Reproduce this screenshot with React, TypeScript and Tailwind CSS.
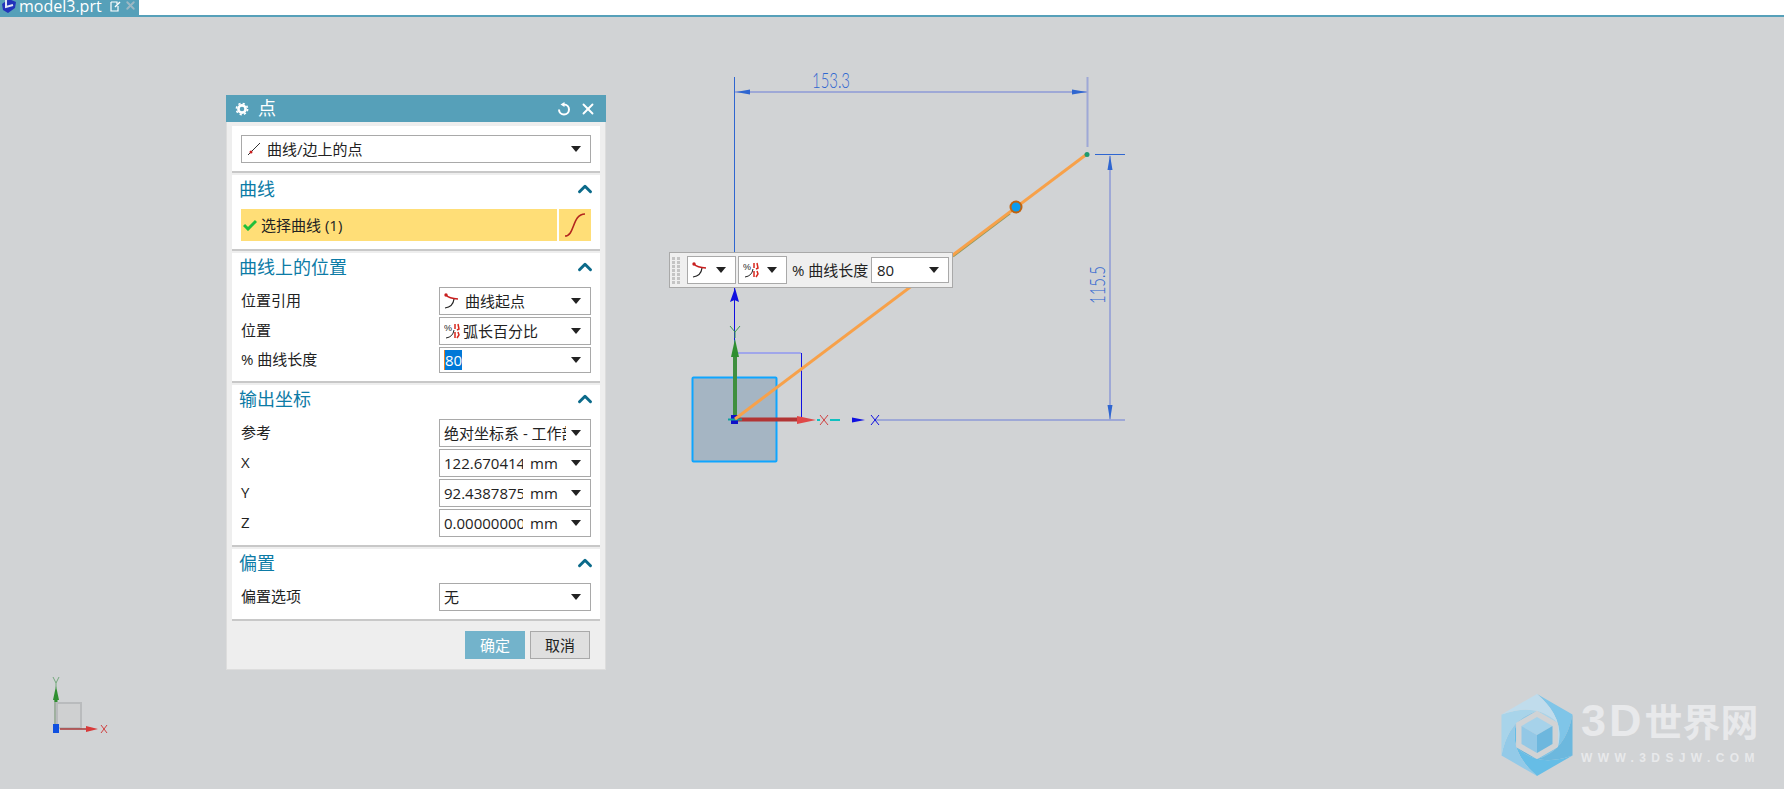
import React from 'react';
import { ChevronUp, X } from 'lucide-react';

const Caret = () => (
  <span className="ml-auto w-0 h-0 border-x-[5px] border-x-transparent border-t-[6px] border-t-[#222] shrink-0" />
);

const LineIcon = () => (
  <svg width="16" height="16" viewBox="0 0 16 16" className="shrink-0">
    <path d="M2 14 L14 2" stroke="#333" strokeWidth="1" />
    <circle cx="5" cy="11" r="1.5" fill="#c81e1e" />
  </svg>
);

const StartIcon = () => (
  <svg width="16" height="16" viewBox="0 0 16 16" className="shrink-0">
    <path d="M1 15 Q9 14 10 6" stroke="#222" strokeWidth="1.2" fill="none" />
    <path d="M2 2 Q5 5.5 14 6" stroke="#c81e1e" strokeWidth="1.3" fill="none" />
    <circle cx="2" cy="2" r="1.7" fill="#c81e1e" />
  </svg>
);

const PercentIcon = () => (
  <svg width="16" height="16" viewBox="0 0 16 16" className="shrink-0">
    <text x="0" y="8" fontSize="9" fill="#222" fontFamily="Liberation Sans">%</text>
    <path d="M2 15 Q9 14 10 7" stroke="#222" strokeWidth="1" fill="none" />
    <path d="M11 1 V6 M14 1 L15 6 L13 7 M11 9 V15 M14 9 L15 12 L13 15" stroke="#d8281e" strokeWidth="1.5" fill="none" />
  </svg>
);

const Dropdown = ({ children, className = 'w-[152px] h-[28px]' }: { children: React.ReactNode; className?: string }) => (
  <div className={`${className} border border-[#a9a9a9] bg-white flex items-center pl-[4px] pr-[9px] text-[15px] text-[#222]`}>
    {children}
    <Caret />
  </div>
);

const Section = ({ title, children, className = '' }: { title: string; children: React.ReactNode; className?: string }) => (
  <section className={`bg-white border-b-2 border-[#c8c8c8] ${className}`}>
    <div className="h-[30px] pl-[7px] pr-[4px] flex items-center justify-between">
      <span className="text-[18px] text-[#0c7ba6] -mt-[2px]">{title}</span>
      <ChevronUp size={22} strokeWidth={3.2} className="text-[#0b6a8a] -mt-[2px]" />
    </div>
    {children}
  </section>
);

const Row = ({ label, children }: { label: string; children: React.ReactNode }) => (
  <div className="flex items-center justify-between pl-[9px] pr-[9px] text-[15px] text-[#222]">
    <span className="-mt-[2px]">{label}</span>
    {children}
  </div>
);

const NumberValue = ({ value }: { value: string }) => (
  <Dropdown>
    <span className="w-[79px] overflow-hidden whitespace-nowrap">{value}</span>
    <span className="ml-[7px]">mm</span>
  </Dropdown>
);

const PointDialog = () => (
  <div className="absolute left-[226px] top-[95px] w-[380px] h-[575px] bg-[#eeeeee] flex flex-col border-x border-b border-[#dddddd] z-10">
    <div className="h-[27px] bg-[#56a0b9] text-white flex items-center pl-[9px] pr-[9px] -mx-px shrink-0">
      <svg width="14" height="14" viewBox="0 0 14 14" className="shrink-0">
        <circle cx="7" cy="7" r="3.6" stroke="#fff" strokeWidth="2.6" fill="none" />
        <circle cx="7" cy="7" r="5.6" stroke="#fff" strokeWidth="1.6" fill="none" strokeDasharray="2.2 2.2" />
      </svg>
      <span className="ml-[9px] text-[18px]">点</span>
      <svg width="14" height="14" viewBox="0 0 14 14" className="ml-auto shrink-0">
        <path d="M7 2.5 A5 5 0 1 1 2 7.5" stroke="#fff" strokeWidth="2" fill="none" />
        <path d="M3.5 2.6 L7.5 0 V5 Z" fill="#fff" />
      </svg>
      <X size={18} strokeWidth={2.5} className="ml-[8px]" />
    </div>
    <div className="flex flex-col gap-[2px] mx-[5px] mt-[4px]">
      <div className="bg-white border-b-2 border-[#c8c8c8] h-[47px] pt-[9px] pl-[9px] pr-[9px]">
        <Dropdown className="w-[350px] h-[28px]">
          <LineIcon />
          <span className="ml-[5px]">曲线/边上的点</span>
        </Dropdown>
      </div>
      <Section title="曲线" className="h-[76px]">
        <div className="flex gap-[2px] pl-[9px] pr-[9px] mt-[4px]">
          <div className="flex-1 h-[32px] bg-[#ffde77] flex items-center pl-[2px] text-[15px] text-[#222]">
            <svg width="14" height="12" viewBox="0 0 14 12" className="shrink-0">
              <path d="M1 6 L5 10 L13 2" stroke="#1fbf3a" strokeWidth="3" fill="none" />
            </svg>
            <span className="ml-[4px]">选择曲线 (1)</span>
          </div>
          <div className="w-[32px] h-[32px] bg-[#ffde77] flex items-center justify-center">
            <svg width="24" height="26" viewBox="0 0 24 26">
              <path d="M2 24 C12 24 9 2 22 2" stroke="#b3261e" strokeWidth="1.6" fill="none" />
            </svg>
          </div>
        </div>
      </Section>
      <Section title="曲线上的位置" className="h-[130px]">
        <div className="flex flex-col gap-[2px] mt-[4px]">
          <Row label="位置引用">
            <Dropdown>
              <StartIcon />
              <span className="ml-[5px]">曲线起点</span>
            </Dropdown>
          </Row>
          <Row label="位置">
            <Dropdown>
              <PercentIcon />
              <span className="ml-[3px]">弧长百分比</span>
            </Dropdown>
          </Row>
          <Row label="% 曲线长度">
            <Dropdown className="w-[152px] h-[26px]">
              <span className="bg-[#0078d7] text-white leading-[20px] border-l border-[#f08020]">80</span>
            </Dropdown>
          </Row>
        </div>
      </Section>
      <Section title="输出坐标" className="h-[162px]">
        <div className="flex flex-col gap-[2px] mt-[4px]">
          <Row label="参考">
            <Dropdown>
              <span className="w-[122px] overflow-hidden whitespace-nowrap">绝对坐标系 - 工作部件</span>
            </Dropdown>
          </Row>
          <Row label="X"><NumberValue value="122.670414" /></Row>
          <Row label="Y"><NumberValue value="92.4387875" /></Row>
          <Row label="Z"><NumberValue value="0.00000000" /></Row>
        </div>
      </Section>
      <Section title="偏置" className="h-[72px]">
        <div className="mt-[4px]">
          <Row label="偏置选项">
            <Dropdown>
              <span>无</span>
            </Dropdown>
          </Row>
        </div>
      </Section>
    </div>
    <div className="flex justify-end gap-[5px] pr-[15px] mt-[10px] text-[15px]">
      <button className="w-[60px] h-[28px] bg-[#73b3cb] text-white">确定</button>
      <button className="w-[60px] h-[28px] bg-[#dfdfdf] border border-[#a9a9a9] text-[#222]">取消</button>
    </div>
  </div>
);

const FloatingBar = () => (
  <div className="absolute left-[669px] top-[252px] w-[284px] h-[36px] bg-[#efefef] border border-[#a9a9a9] flex items-center pl-[2px] gap-[2px] z-10 text-[15px] text-[#222]">
    <div className="w-[8px] h-[26px] mr-[5px] grid grid-cols-2 gap-[1px] content-between">
      {Array.from({ length: 14 }).map((_, i) => (
        <span key={i} className="w-[3px] h-[3px] bg-[#c4c4c4]" />
      ))}
    </div>
    <Dropdown className="w-[49px] h-[28px]"><StartIcon /></Dropdown>
    <Dropdown className="w-[49px] h-[28px]"><PercentIcon /></Dropdown>
    <span className="ml-[3px] w-[77px] whitespace-nowrap">% 曲线长度</span>
    <Dropdown className="w-[78px] h-[26px]"><span className="ml-[1px]">80</span></Dropdown>
  </div>
);

const ModelView = () => {
  const dim = '#9ea8d6';
  const blue = '#2f66d0';
  return (
    <svg width="1784" height="789" className="absolute inset-0" shapeRendering="geometricPrecision">
      <path d="M734.5 77 V252 M734.5 288 V420" stroke="#2f66d0" strokeWidth="1" />
      <path d="M735 92 H1087 M1087.5 77 V147 M1110 156 V420 M875 420 H1125" stroke={dim} strokeWidth="2" />
      <path d="M1095 154.5 H1125" stroke={blue} strokeWidth="1" />
      <path d="M736 92 L750 89.5 V94.5 Z M1087 92 L1072 89.5 V94.5 Z M1110 155 L1107.5 170 H1112.5 Z M1110 420 L1107.5 405 H1112.5 Z" fill={blue} />
      <text x="812" y="88" fontSize="21" fontFamily="Lato" fontWeight="300" fill={blue} textLength="38" lengthAdjust="spacingAndGlyphs">153.3</text>
      <text
        transform="translate(1105 304) rotate(-90)"
        fontSize="21"
        fontFamily="Lato"
        fontWeight="300"
        fill={blue}
        textLength="38"
        lengthAdjust="spacingAndGlyphs"
      >
        115.5
      </text>

      <rect x="692.5" y="377.5" width="84" height="84" fill="#a5b5c3" stroke="#0ea5ff" strokeWidth="2" rx="1" />
      <path d="M736 353 H801" stroke="#a0a6ea" strokeWidth="2" />
      <path d="M801.5 353 V418" stroke="#1010e0" strokeWidth="1" />
      <path d="M734.5 300 L730 302 L735 288 L739 302 Z" fill="#1010e0" />
      <path d="M734.5 288 V340" stroke="#1010e0" strokeWidth="1" />
      <path d="M730 326 L735 332 L740 326 M735 332 V338" stroke="#3a9a50" strokeWidth="1" fill="none" />
      <path d="M735 418 V352" stroke="#3f8f3f" strokeWidth="4" />
      <path d="M735 339 L731 357 H739 Z" fill="#2f8f30" />
      <path d="M736 419.5 H800" stroke="#b23434" strokeWidth="4" />
      <path d="M816 420 L797 416 V424 Z" fill="#e04848" />
      <path d="M820 415 L828 425 M828 415 L820 425" stroke="#d04040" strokeWidth="1" />
      <path d="M817 420 H820 M830 420 H840" stroke="#10c0c0" strokeWidth="2" />
      <path d="M852 417.5 L865 420 L852 422.5 Z" fill="#1010e0" />
      <path d="M871 415 L879 425 M879 415 L871 425" stroke="#1010e0" strokeWidth="1" />
      <rect x="731" y="415" width="7" height="9" fill="#1010c8" />
      <path d="M728 419.5 H742" stroke="#10a0a0" strokeWidth="2" />

      <path d="M953 256.5 L1010 213.5" stroke="#8f9a60" strokeWidth="2" />
      <path d="M735 419 L1087 154" stroke="#f7a14a" strokeWidth="3" />
      <circle cx="1087" cy="154.5" r="2.5" fill="#1c9a70" />
      <circle cx="1016" cy="207" r="6.5" fill="#c0630f" />
      <circle cx="1016" cy="207" r="4.5" fill="#0a9cf0" />

      <rect x="57" y="703" width="24" height="25" fill="#cfd0d1" stroke="#b9bbbd" strokeWidth="2" />
      <path d="M55 726 V700" stroke="#9fb09f" strokeWidth="2" />
      <path d="M56 686 L53 700 H59 Z" fill="#2f8f30" />
      <path d="M56 700 V702" stroke="#2f8f30" strokeWidth="3" />
      <path d="M53 677 L56 683 L59 677 M56 683 V688" stroke="#74a97c" strokeWidth="1" fill="none" />
      <path d="M60 729 H92" stroke="#a83838" strokeWidth="1.5" />
      <path d="M98 729 L86 726 V732 Z" fill="#d83a3a" />
      <path d="M101 725 L107 733 M107 725 L101 733" stroke="#d04040" strokeWidth="1" />
      <rect x="53" y="724" width="6" height="9" fill="#1050e0" />
    </svg>
  );
};

const hex = (r: number) =>
  [0, 1, 2, 3, 4, 5].map((i) => {
    const a = (Math.PI / 3) * i - Math.PI / 2;
    return [36 + r * Math.cos(a), 41 + r * Math.sin(a)];
  });

const WatermarkLogo = () => {
  const outer = hex(41);
  const inner = hex(24);
  const bulge = hex(33);
  const blades = ['#7fc5e8', '#6cb8de', '#66bde6', '#93cae8', '#a8d4ea', '#c0dcec'];
  return (
    <svg width="72" height="82" viewBox="0 0 72 82" className="shrink-0">
      {blades.map((fill, i) => {
        const a = outer[i];
        const b = outer[(i + 1) % 6];
        const c = inner[(i + 3) % 6];
        const d = inner[(i + 2) % 6];
        const cb = bulge[(i + 2) % 6];
        const ca = bulge[(i + 1) % 6];
        return (
          <path
            key={fill}
            d={`M${a[0]} ${a[1]} L${b[0]} ${b[1]} Q${cb[0]} ${cb[1]} ${c[0]} ${c[1]} L${d[0]} ${d[1]} Q${ca[0]} ${ca[1]} ${a[0]} ${a[1]} Z`}
            fill={fill}
          />
        );
      })}
      <polygon points={inner.map((p) => p.join(',')).join(' ')} fill="#d1d3d5" />
      <path d="M36 23 L51.5 32 L36 41 L20.5 32 Z" fill="#a6d2ea" />
      <path d="M20.5 32 L36 41 V59 L20.5 50 Z" fill="#93c8e6" />
      <path d="M51.5 32 L36 41 V59 L51.5 50 Z" fill="#6db7de" />
    </svg>
  );
};

const Watermark = () => (
  <div className="absolute left-[1501px] top-[694px] flex items-start">
    <WatermarkLogo />
    <div className="ml-[8px] text-[#e8e9eb] font-bold">
      <div className="h-[54px] flex items-center whitespace-nowrap">
        <span className="text-[45px] tracking-[3px] font-['Liberation_Sans']">3D</span>
        <span className="text-[38px]">世界网</span>
      </div>
      <div className="text-[12px] leading-[14px] mt-[3px] tracking-[5.4px] whitespace-nowrap font-['Liberation_Sans']">WWW.3DSJW.COM</div>
    </div>
  </div>
);

export default function App() {
  return (
    <div className="relative w-[1784px] h-[789px] overflow-hidden bg-[#d1d3d5] font-['Open_Sans','Noto_Sans_CJK_SC',sans-serif]">
      <header className="relative z-10 h-[17px] bg-white border-b-2 border-[#56a0b9]">
        <div className="w-[139px] h-[15px] bg-[#56a0b9] text-white flex items-center overflow-hidden text-[16px] pl-[1px]">
          <svg width="16" height="14" viewBox="0 0 16 14" className="shrink-0 -mt-[3px]">
            <path d="M1 5 L8 0 L15 3 L14 9 L7 14 L2 11 Z" fill="#2233bb" />
            <path d="M5 1 V8 L12 6" stroke="#dfe8f5" strokeWidth="2" fill="none" />
          </svg>
          <span className="ml-[2px] -mt-[4px]">model3.prt</span>
          <svg width="12" height="12" viewBox="0 0 12 12" className="ml-[7px] shrink-0 -mt-[3px]">
            <path d="M2 2 H8 V4 M2 2 V11 H9 V6" stroke="#fff" strokeWidth="1.2" fill="none" />
            <path d="M6 7 L11 2" stroke="#fff" strokeWidth="1.4" />
          </svg>
          <X size={13} strokeWidth={3.5} className="ml-[3px] -mt-[5px] text-[#9db8c4]" />
        </div>
      </header>
      <ModelView />
      <PointDialog />
      <FloatingBar />
      <Watermark />
    </div>
  );
}
